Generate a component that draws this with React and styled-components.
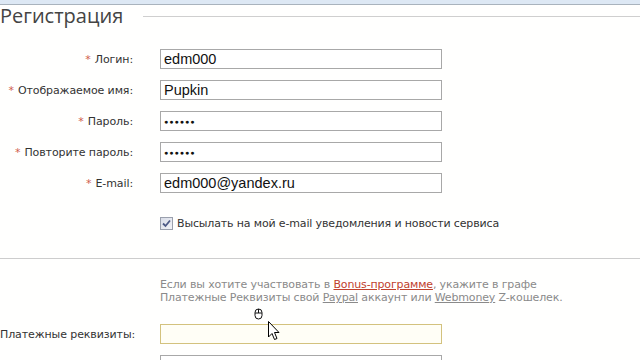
import React from 'react'
import styled, { createGlobalStyle } from 'styled-components'

const GlobalStyle = createGlobalStyle`
  html, body {
    margin: 0;
    padding: 0;
    background: #fffffe;
    overflow: hidden;
  }
  body {
    font-family: "DejaVu Sans", Tahoma, sans-serif;
  }
`

const Page = styled.div`
  position: relative;
  width: 640px;
  height: 360px;
  overflow: hidden;
`

const TopStrip = styled.div`
  height: 4px;
  background: #dde8f4;
  border-bottom: 1px solid #a9b3bd;
`

const Header = styled.div`
  display: flex;
  align-items: center;
  height: 22px;
`

const Title = styled.h1`
  margin: 0;
  font-family: "Open Sans", "Noto Sans", sans-serif;
  font-weight: 400;
  font-size: 20px;
  line-height: 22px;
  color: #444;
`

const TitleLine = styled.div`
  flex: 1;
  height: 1px;
  background: #cfcfcf;
  margin-left: 20px;
`

const Form = styled.div`
  display: grid;
  grid-template-columns: 133px 282px;
  column-gap: 27px;
  row-gap: 11px;
  align-items: center;
  margin-top: ${({ top }) => top}px;
`

const Label = styled.label`
  text-align: right;
  font-size: 11px;
  letter-spacing: -0.1px;
  color: #333;
  white-space: nowrap;
`

const Star = styled.span`
  color: #d0604c;
  margin-right: 4px;
`

const Field = styled.div`
  box-sizing: border-box;
  height: 20px;
  border: 1px solid ${({ focus }) => (focus ? '#d3c27e' : '#a8a8a8')};
  background: ${({ focus }) => (focus ? '#fffef6' : '#fff')};
  font-family: "Liberation Sans", Arial, sans-serif;
  font-size: 14.5px;
  line-height: 18px;
  padding: 0 3px;
  color: #111;
`

const Dots = styled.span`
  font-size: 7px;
  letter-spacing: 1px;
  vertical-align: 2px;
`

const CheckRow = styled.div`
  display: flex;
  align-items: center;
  gap: 4px;
  margin: 24px 0 0 160px;
  font-size: 11px;
  letter-spacing: -0.15px;
  color: #333;
`

const CheckBox = styled.span`
  box-sizing: border-box;
  display: inline-flex;
  align-items: center;
  justify-content: center;
  width: 13px;
  height: 13px;
  border: 1px solid #9aa0ad;
  background: linear-gradient(135deg, #d9dde8, #f2f3f7);
`

const Divider = styled.div`
  height: 1px;
  background: #cdcdcd;
  margin-top: 28px;
`

const Info = styled.p`
  margin: 19px 0 0 160px;
  font-size: 11px;
  letter-spacing: -0.15px;
  line-height: 13px;
  color: #8a8a8a;
`

const Link = styled.span`
  text-decoration: underline;
  color: ${({ red }) => (red ? '#c0402d' : '#8a8a8a')};
`

const Cursor = styled.svg`
  position: absolute;
  left: ${({ x }) => x}px;
  top: ${({ y }) => y}px;
`

const rows = [
  { label: 'Логин:', value: 'edm000' },
  { label: 'Отображаемое имя:', value: 'Pupkin' },
  { label: 'Пароль:', pass: true },
  { label: 'Повторите пароль:', pass: true },
  { label: 'E-mail:', value: 'edm000@yandex.ru' },
]

const App = () => {
  return (
    <Page>
      <GlobalStyle />
      <TopStrip />
      <Header>
        <Title>Регистрация</Title>
        <TitleLine />
      </Header>

      <Form top={22}>
        {rows.map((r) => (
          <React.Fragment key={r.label}>
            <Label>
              <Star>*</Star>
              {r.label}
            </Label>
            <Field>{r.pass ? <Dots>●●●●●●</Dots> : r.value}</Field>
          </React.Fragment>
        ))}
      </Form>

      <CheckRow>
        <CheckBox>
          <svg width="9" height="9" viewBox="0 0 9 9">
            <path d="M1 4.5 L3.5 7 L8 1.5" fill="none" stroke="#4d5a86" strokeWidth="1.8" />
          </svg>
        </CheckBox>
        Высылать на мой e-mail уведомления и новости сервиса
      </CheckRow>

      <Divider />

      <Info>
        Если вы хотите участвовать в <Link red>Bonus-программе</Link>, укажите в графе
        <br />
        Платежные Реквизиты свой <Link>Paypal</Link> аккаунт или <Link>Webmoney</Link> Z-кошелек.
      </Info>

      <Form top={20}>
        <Label>Платежные реквизиты:</Label>
        <Field focus />
        <Label />
        <Field />
      </Form>

      <Cursor x={254} y={308} width="9" height="12" viewBox="0 0 9 12">
        <rect x="1" y="1" width="7" height="10" rx="3.5" fill="#fff" stroke="#111" strokeWidth="1" />
        <line x1="4.5" y1="1" x2="4.5" y2="5" stroke="#111" strokeWidth="1" />
        <line x1="1" y1="5" x2="8" y2="5" stroke="#111" strokeWidth="1" />
      </Cursor>
      <Cursor x={268} y={321} width="12" height="20" viewBox="0 0 12 20">
        <path d="M0.5 0.5 L0.5 16 L4 12.5 L6.5 18.5 L9 17.5 L6.5 11.5 L11 11.5 Z" fill="#fff" stroke="#000" strokeWidth="1" />
      </Cursor>
    </Page>
  )
}

export default App
